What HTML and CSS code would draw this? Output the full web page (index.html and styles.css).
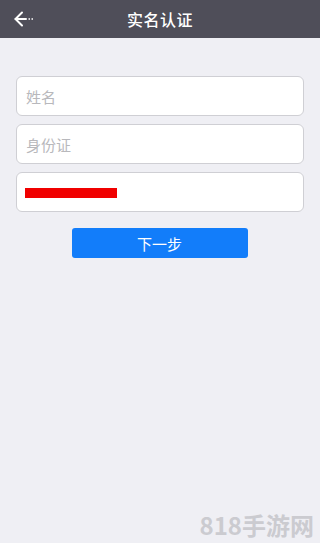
FILE: index.html
```html
<!DOCTYPE html>
<html lang="zh">
<head>
<meta charset="utf-8">
<link rel="stylesheet" href="styles.css">
</head>
<body>
<div class="page">
  <header class="bar">
    <svg class="back" width="22" height="16" viewBox="0 0 22 16">
      <path d="M8 1.5 L1.5 8 L8 14.5" fill="none" stroke="#fff" stroke-width="2" stroke-linecap="round" stroke-linejoin="round"/>
      <path d="M1.5 8 H12" stroke="#fff" stroke-width="2" stroke-linecap="round"/>
      <path d="M14.5 8 H20" stroke="#fff" stroke-width="1.6" stroke-dasharray="1.5 1.5"/>
    </svg>
    <h1 class="title">实名认证</h1>
  </header>
  <main class="form">
    <div class="field"><span class="ph">姓名</span></div>
    <div class="field"><span class="ph">身份证</span></div>
    <div class="field"><span class="redact"></span></div>
    <button class="next">下一步</button>
  </main>
  <div class="mark">818手游网</div>
</div>
</body>
</html>
```
FILE: styles.css
```css
html, body {
  margin: 0;
  padding: 0;
}
body {
  background: #efeff4;
  font-family: "Noto Sans CJK SC", "Noto Sans", sans-serif;
}
.page {
  position: relative;
  width: 320px;
  height: 543px;
  overflow: hidden;
  background: #efeff4;
}
.bar {
  position: relative;
  height: 38px;
  background: #4f4e59;
  display: flex;
  align-items: center;
  justify-content: center;
}
.back {
  position: absolute;
  left: 14px;
  top: 11px;
}
.title {
  margin: 0;
  color: #fff;
  font-size: 16px;
  font-weight: 500;
  letter-spacing: 0.5px;
}
.form {
  display: flex;
  flex-direction: column;
  align-items: center;
  padding: 38px 16px 0 16px;
  gap: 8px;
}
.field {
  box-sizing: border-box;
  width: 288px;
  height: 40px;
  align-self: flex-start;
  background: #fff;
  border: 1px solid #cfcfd4;
  border-radius: 6px;
  display: flex;
  align-items: center;
  padding-left: 9px;
}
.ph {
  color: #b8b8bc;
  font-size: 15px;
}
.redact {
  display: block;
  width: 92px;
  height: 10px;
  background: #f00000;
  margin-left: -1px;
  margin-top: 1px;
}
.next {
  margin-top: 8px;
  width: 176px;
  height: 30px;
  border: none;
  border-radius: 3px;
  background: #127dfa;
  color: #fff;
  font-family: "Noto Sans CJK SC", "Noto Sans", sans-serif;
  font-size: 15px;
  margin-left: -1px;
}
.mark {
  position: absolute;
  right: 6px;
  bottom: 3px;
  color: #cbcbd0;
  font-size: 24px;
  font-weight: 700;
  font-family: "Noto Sans CJK SC", "Noto Sans", sans-serif;
  letter-spacing: 0;
  line-height: 30px;
}
```
